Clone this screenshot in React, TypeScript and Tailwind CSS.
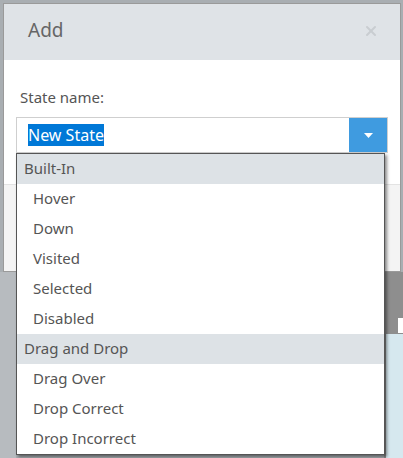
import { X } from "lucide-react";

type Group = { title: string; items: string[] };

const groups: Group[] = [
  { title: "Built-In", items: ["Hover", "Down", "Visited", "Selected", "Disabled"] },
  { title: "Drag and Drop", items: ["Drag Over", "Drop Correct", "Drop Incorrect"] },
];

export default function App() {
  return (
    <div
      className="relative w-[403px] h-[458px] overflow-hidden bg-[#a9aeb2] text-[#555]"
      style={{ fontFamily: '"Noto Sans", "Open Sans", sans-serif' }}
    >
      {/* dimmed page content behind the modal */}
      <div className="absolute left-[384px] top-[272px] w-[19px] h-[186px] bg-[#8e8e8e]" />
      <div className="absolute left-[398px] top-[318px] w-[5px] h-[15px] bg-white" />
      <div className="absolute left-[386px] top-[334px] w-[17px] h-[124px] bg-[#d6e8ef]" />
      <div className="absolute left-0 top-[272px] w-[16px] h-[186px] bg-[#b7bbbf]" />

      {/* dialog */}
      <div className="relative ml-[3px] mt-[3px] w-[398px] h-[269px] border border-[#9a9a9a] bg-white flex flex-col">
        <div className="h-[56px] shrink-0 bg-[#dfe3e7] flex items-center justify-between pl-[24px] pr-[21px] pb-[3px]">
          <span className="text-[19px] text-[#666]">Add</span>
          <X className="w-[16px] h-[16px] text-[#c9cdd1]" strokeWidth={3} />
        </div>
        <div className="px-[12px] pt-[27px]">
          <div className="pl-[4px] text-[15px] leading-[20px] text-[#555]">State name:</div>
          <div className="mt-[10px] flex h-[36px] border border-[#cfcfcf]">
            <div className="flex-1 flex items-center pl-[11px]">
              <span className="bg-[#0078d7] text-white text-[16px] leading-[22px]">New State</span>
            </div>
            <div className="w-[38px] bg-[#3f9be0] flex items-center justify-center">
              <svg width="9" height="5" viewBox="0 0 9 5">
                <path d="M0 0h9L4.5 5z" fill="#fff" />
              </svg>
            </div>
          </div>
        </div>
        <div className="mt-[31px] flex-1 border-t border-[#e3e3e3] bg-[#f4f4f4]" />
      </div>

      {/* dropdown list */}
      <div className="absolute left-[16px] top-[153px] w-[369px] border border-[#555] bg-white shadow-[2px_2px_3px_rgba(0,0,0,0.45)]">
        {groups.map((g) => (
          <div key={g.title}>
            <div className="h-[30px] bg-[#dde2e6] flex items-center pl-[7px] pb-[1px] text-[15px] text-[#555]">
              {g.title}
            </div>
            {g.items.map((item) => (
              <div key={item} className="h-[30px] flex items-center pl-[16px] pb-[1px] text-[15px] text-[#555]">
                {item}
              </div>
            ))}
          </div>
        ))}
      </div>
    </div>
  );
}
